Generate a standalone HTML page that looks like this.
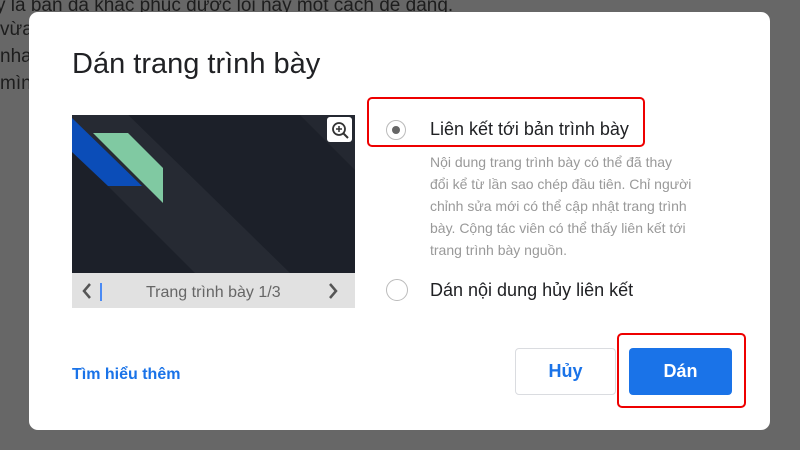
<!DOCTYPE html>
<html><head><meta charset="utf-8"><style>
body{margin:0;width:800px;height:450px;background:#676767;position:relative;overflow:hidden;font-family:"Liberation Sans",sans-serif}
.bg{position:absolute;color:#1d1d1d;font-size:19px;white-space:nowrap}
.dlg{position:absolute;left:29px;top:12px;width:741px;height:418px;background:#fff;border-radius:9px}
.a{position:absolute;white-space:nowrap}
</style></head><body>
<div class="bg" style="left:-4px;top:-5px">y là bạn đã khắc phục được lỗi này một cách dễ dàng.</div>
<div class="bg" style="left:0;top:19px">vừa</div>
<div class="bg" style="left:0;top:46px">nha</div>
<div class="bg" style="left:0;top:73px">mình</div>
<div class="dlg"></div>
<div class="a" style="left:72px;top:48px;font-size:29px;color:#202124">Dán trang trình bày</div>
<svg class="a" style="left:72px;top:115px" width="283" height="158" viewBox="72 115 283 158">
<rect x="72" y="115" width="283" height="158" fill="#1c2029"/>
<polygon points="72,150 195,273 290,273 72,60" fill="#262a33"/>
<polygon points="300,115 355,115 355,170" fill="#242831"/>
<polygon points="72,118 142,186 108,186 72,152" fill="#0b4db8"/>
<polygon points="93,133 128,133 163,168 163,203" fill="#80c9a2"/>
<rect x="327" y="117" width="25" height="25" rx="3" fill="#fff"/>
<circle cx="339" cy="129" r="6" fill="none" stroke="#333" stroke-width="1.8"/>
<line x1="343" y1="133" x2="348" y2="138" stroke="#333" stroke-width="2"/>
<path d="M336 129h6M339 126v6" stroke="#333" stroke-width="1.5"/>
</svg>
<div class="a" style="left:72px;top:273px;width:283px;height:35px;background:#e1e1e1"></div>
<svg class="a" style="left:78px;top:281px" width="280" height="20"><path d="M12 3l-6 7 6 7" fill="none" stroke="#555" stroke-width="2.5"/><rect x="22" y="2" width="2" height="18" fill="#4a8af4"/><path d="M252 3l6 7-6 7" fill="none" stroke="#555" stroke-width="2.5"/></svg>
<div class="a" style="left:146px;top:284px;font-size:16px;color:#666">Trang trình bày 1/3</div>
<div class="a" style="left:367px;top:97px;width:274px;height:46px;border:2.5px solid #e00;border-radius:5px"></div>
<div class="a" style="left:386px;top:120px;width:18px;height:18px;border:1px solid #bbb;border-radius:50%"></div>
<div class="a" style="left:392px;top:126px;width:8px;height:8px;background:#666;border-radius:50%"></div>
<div class="a" style="left:430px;top:119px;font-size:18px;color:#202124">Liên kết tới bản trình bày</div>
<div class="a" style="left:430px;top:151px;font-size:14px;line-height:22px;color:#999">Nội dung trang trình bày có thể đã thay<br>đổi kể từ lần sao chép đầu tiên. Chỉ người<br>chỉnh sửa mới có thể cập nhật trang trình<br>bày. Cộng tác viên có thể thấy liên kết tới<br>trang trình bày nguồn.</div>
<div class="a" style="left:386px;top:279px;width:20px;height:20px;border:1px solid #bbb;border-radius:50%"></div>
<div class="a" style="left:430px;top:280px;font-size:18px;color:#202124">Dán nội dung hủy liên kết</div>
<div class="a" style="left:72px;top:366px;font-size:16px;font-weight:bold;color:#1a73e8">Tìm hiểu thêm</div>
<div class="a" style="left:515px;top:348px;width:99px;height:45px;border:1px solid #dadce0;border-radius:4px;text-align:center;line-height:45px;font-size:18px;font-weight:bold;color:#1a73e8">Hủy</div>
<div class="a" style="left:617px;top:333px;width:125px;height:71px;border:2.5px solid #e00;border-radius:5px"></div>
<div class="a" style="left:629px;top:348px;width:103px;height:47px;background:#1a73e8;border-radius:4px;text-align:center;line-height:47px;font-size:18px;font-weight:bold;color:#fff">Dán</div>
</body></html>
